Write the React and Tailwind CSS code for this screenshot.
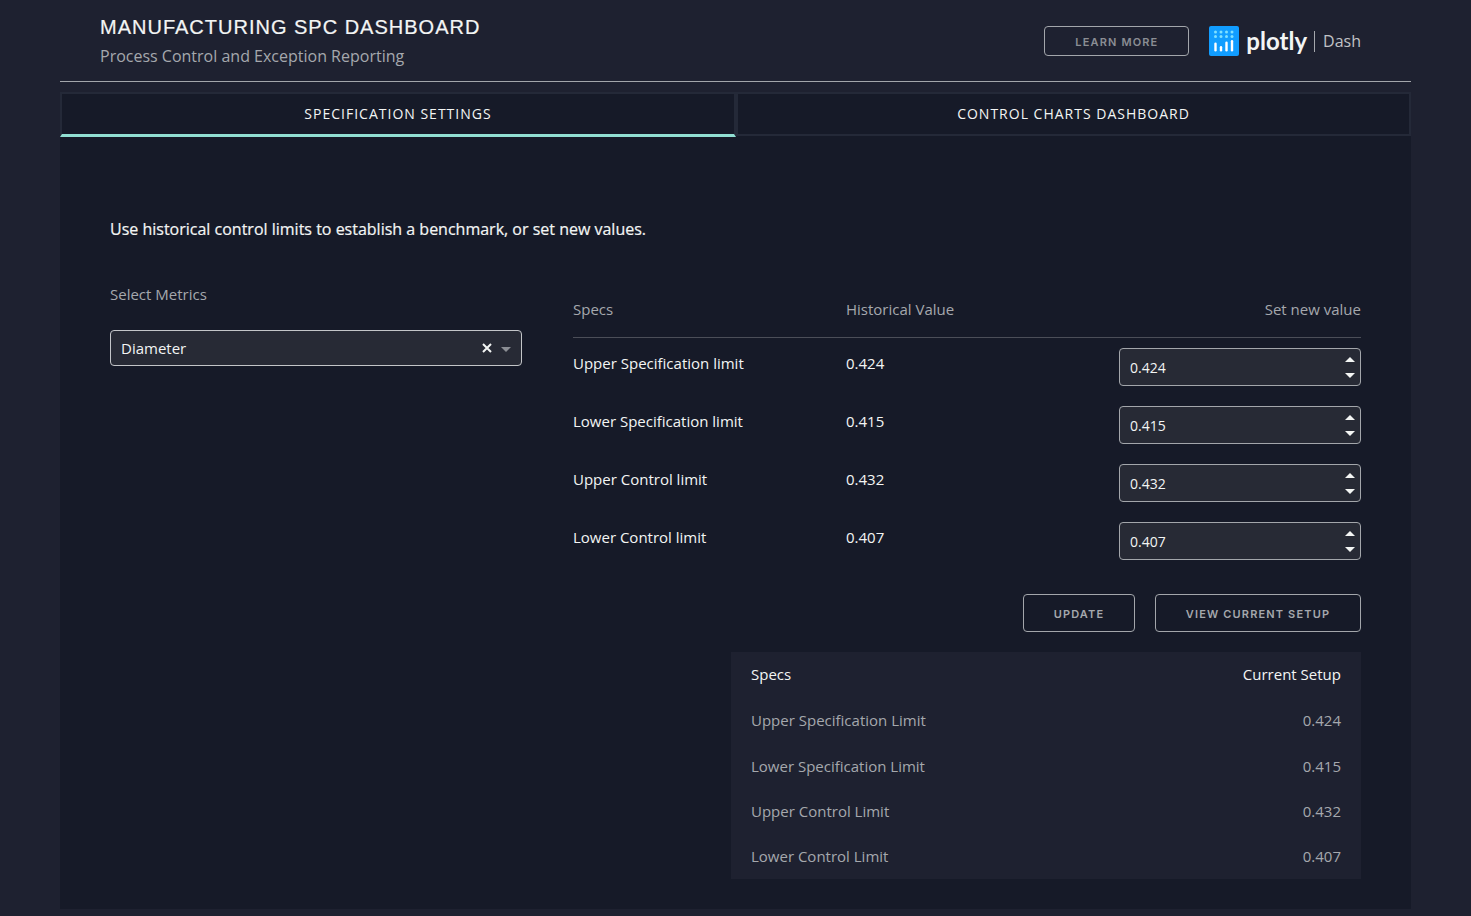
import React from "react";

const OS = "font-['Open_Sans',sans-serif]";

function Stepper() {
  return (
    <div className="flex flex-col justify-between h-[21px] w-[10px]">
      <svg width="10" height="5" viewBox="0 0 10 5" className="block"><path d="M5 0 L10 5 H0 Z" fill="#f3f5f4" /></svg>
      <svg width="10" height="5" viewBox="0 0 10 5" className="block"><path d="M0 0 H10 L5 5 Z" fill="#f3f5f4" /></svg>
    </div>
  );
}

function SpecRow({ label, value }) {
  return (
    <div className="flex h-[58px] pt-[10px]">
      <div className="w-[273px] text-[15px] text-[#f3f5f4] leading-[30px]">{label}</div>
      <div className="flex-1 text-[15px] text-[#f3f5f4] leading-[30px]">{value}</div>
      <div className="w-[242px] h-[38px] rounded-[4px] border border-[#a3a6ab] bg-[#272a35] flex items-center justify-between pl-[10px] pr-[5px]">
        <span className="text-[14px] text-[#f3f5f4] pt-[1px]">{value}</span>
        <Stepper />
      </div>
    </div>
  );
}

function TableRow({ label, value, h }) {
  return (
    <div className={`flex items-center justify-between px-[20px] text-[15px] text-[#a5a8ad] ${h}`}>
      <span>{label}</span>
      <span>{value}</span>
    </div>
  );
}

function Logo() {
  return (
    <div className="flex items-center h-[30px]">
      <svg width="30" height="30" viewBox="0 0 30 30" className="block">
        <rect width="30" height="30" rx="2" fill="#119dff" />
        <g fill="#7fe0ff">
          <circle cx="6.5" cy="6" r="1.5" /><circle cx="12" cy="6" r="1.5" /><circle cx="17.5" cy="6" r="1.5" /><circle cx="23" cy="6" r="1.5" />
          <circle cx="6.5" cy="10.5" r="1.5" /><circle cx="12" cy="10.5" r="1.5" /><circle cx="17.5" cy="10.5" r="1.5" /><circle cx="23" cy="10.5" r="1.5" />
        </g>
        <g fill="#ffffff">
          <rect x="5.3" y="16.5" width="2.4" height="9" rx="1.2" />
          <rect x="10.8" y="20" width="2.4" height="5.5" rx="1.2" />
          <rect x="16.3" y="15.5" width="2.4" height="10" rx="1.2" />
          <rect x="21.8" y="14" width="2.4" height="11.5" rx="1.2" />
        </g>
      </svg>
      <span className="ml-[7px] text-[24px] font-bold text-[#f3f5f4] leading-[30px] font-['Lato',sans-serif]">plotly</span>
      <span className="ml-[7px] w-px h-[21px] bg-[#a5a8ad]" />
      <span className="ml-[8px] text-[16px] text-[#c0c2c6] leading-[30px]">Dash</span>
    </div>
  );
}

export default function App() {
  return (
    <div className={`min-h-[916px] bg-[#1e2130] px-[60px] ${OS}`}>
      <header className="h-[82px] border-b border-[#a3a6ab] pl-[40px] pr-[50px] flex items-start justify-between">
        <div>
          <h1 className="mt-[14px] text-[20px] leading-[26px] tracking-[1px] text-[#f3f5f4] font-['Liberation_Sans',sans-serif] [-webkit-text-stroke:0.2px_#f3f5f4]">MANUFACTURING SPC DASHBOARD</h1>
          <p className="mt-[4px] text-[16px] leading-[24px] text-[#a5a8ad]">Process Control and Exception Reporting</p>
        </div>
        <div className="flex items-center mt-[26px]">
          <button className="w-[145px] h-[30px] pt-[2px] rounded-[4px] border border-[#a3a6ab] text-[11px] font-semibold tracking-[1.15px] text-[#8b8e94] font-['Inter',sans-serif]">LEARN MORE</button>
          <div className="ml-[20px]"><Logo /></div>
        </div>
      </header>

      <nav className="flex items-start mt-[10px] h-[45px] bg-[#161a28]">
        <div className="w-[676px] h-[45px] pb-[2px] border-2 border-[#242938] border-b-[3px] border-b-[#91dfd2] flex items-center justify-center text-[14px] tracking-[1px] text-[#f3f5f4]">SPECIFICATION SETTINGS</div>
        <div className="flex-1 h-[44px] pb-[2px] border-2 border-[#242938] flex items-center justify-center text-[14px] tracking-[1px] text-[#f3f5f4]">CONTROL CHARTS DASHBOARD</div>
      </nav>

      <main className="h-[772px] bg-[#161a28] px-[50px] pt-[80px]">
        <p className="text-[16px] leading-[24px] text-[#f3f5f4] [-webkit-text-stroke:0.2px_#f3f5f4]">Use historical control limits to establish a benchmark, or set new values.</p>

        <div className="flex mt-[41px]">
          <div className="w-[412px]">
            <div className="text-[15px] leading-[24px] text-[#a5a8ad] h-[24px]">Select Metrics</div>
            <div className="mt-[24px] h-[36px] rounded-[4px] border border-[#c3c5c8] bg-[#272a35] flex items-center pl-[10px] pr-[10px]">
              <span className="flex-1 text-[15px] text-[#f3f5f4]">Diameter</span>
              <svg width="10" height="10" viewBox="0 0 10 10" className="mr-[9px]"><path d="M1 1 L9 9 M9 1 L1 9" stroke="#f3f5f4" strokeWidth="2" /></svg>
              <svg width="10" height="5" viewBox="0 0 10 5" className="mt-[2px]"><path d="M0 0 H10 L5 5 Z" fill="#8b8e94" /></svg>
            </div>
          </div>

          <div className="ml-[51px] flex-1">
            <div className="flex h-[55px] items-start pt-[10px] border-b border-[#4b4e58] text-[15px] leading-[24px] text-[#a5a8ad] mt-[1px]">
              <div className="w-[273px] mt-[4px]">Specs</div>
              <div className="flex-1 mt-[4px]">Historical Value</div>
              <div className="mt-[4px]">Set new value</div>
            </div>
            <SpecRow label="Upper Specification limit" value="0.424" />
            <SpecRow label="Lower Specification limit" value="0.415" />
            <SpecRow label="Upper Control limit" value="0.432" />
            <SpecRow label="Lower Control limit" value="0.407" />

            <div className="flex justify-end gap-[20px] mt-[24px]">
              <button className="w-[112px] h-[38px] pt-[2px] rounded-[4px] border border-[#a3a6ab] text-[11px] font-semibold tracking-[1.15px] text-[#a5a8ad] font-['Inter',sans-serif]">UPDATE</button>
              <button className="w-[206px] h-[38px] pt-[2px] rounded-[4px] border border-[#a3a6ab] text-[11px] font-semibold tracking-[1.15px] text-[#a5a8ad] font-['Inter',sans-serif]">VIEW CURRENT SETUP</button>
            </div>

            <div className="ml-[158px] mt-[20px] h-[227px] bg-[#1e2130] flex flex-col">
              <div className="flex items-center justify-between px-[20px] h-[45px] text-[15px] text-[#f3f5f4]"><span>Specs</span><span>Current Setup</span></div>
              <TableRow label="Upper Specification Limit" value="0.424" h="h-[46px]" />
              <TableRow label="Lower Specification Limit" value="0.415" h="h-[46px]" />
              <TableRow label="Upper Control Limit" value="0.432" h="h-[45px]" />
              <TableRow label="Lower Control Limit" value="0.407" h="h-[45px]" />
            </div>
          </div>
        </div>
      </main>
    </div>
  );
}
